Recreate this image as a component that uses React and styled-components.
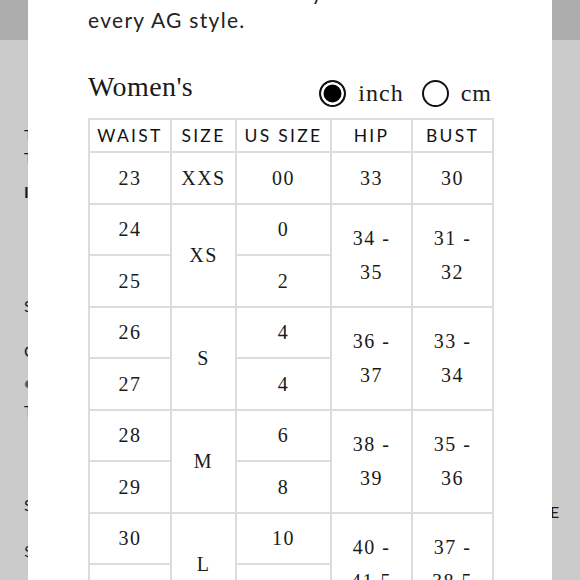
import React from 'react';
import styled, { createGlobalStyle } from 'styled-components';

const GlobalStyle = createGlobalStyle`
  html, body {
    margin: 0;
    padding: 0;
    height: 100%;
    overflow: hidden;
  }
  body {
    background: #cbcbcb;
    font-family: "Liberation Serif", serif;
  }
`;

const groups = [
  { size: 'XXS', hip: '33', bust: '30', rows: [['23', '00']] },
  { size: 'XS', hip: ['34 -', '35'], bust: ['31 -', '32'], rows: [['24', '0'], ['25', '2']] },
  { size: 'S', hip: ['36 -', '37'], bust: ['33 -', '34'], rows: [['26', '4'], ['27', '4']] },
  { size: 'M', hip: ['38 -', '39'], bust: ['35 -', '36'], rows: [['28', '6'], ['29', '8']] },
  { size: 'L', hip: ['40 -', '41.5'], bust: ['37 -', '38.5'], rows: [['30', '10'], ['31', '12']] },
];

// slivers of the page that sits behind the dimmed overlay
const backdropLines = [
  { text: 'T', top: 88 },
  { text: 'T', top: 9 },
  { text: 'I', top: 20, bold: true },
  { text: 'S', top: 100 },
  { text: 'C', top: 31 },
  { text: '●', top: 18, blue: true },
  { text: 'T', top: 14 },
  { text: 'S', top: 80 },
  { text: '$', top: 32 },
];

const Cell = ({ value }) =>
  Array.isArray(value) ? (
    <>
      {value[0]}
      <br />
      {value[1]}
    </>
  ) : (
    value
  );

export default function App() {
  return (
    <>
      <GlobalStyle />
      <Page>
        <TopBar />
        <Backdrop>
          {backdropLines.map((l, i) => (
            <Peek key={i} $top={l.top} $bold={l.bold} $blue={l.blue}>
              {l.text}
            </Peek>
          ))}
        </Backdrop>
        <RightPeek>E</RightPeek>
      </Page>

      <Modal>
        <Inner>
          <Intro>
            Use our chart to find your fit in
            <br />
            every AG style.
          </Intro>

          <HeadRow>
            <Title>Women's</Title>
            <Units>
              <Unit>
                <Radio $checked />
                inch
              </Unit>
              <Unit>
                <Radio />
                cm
              </Unit>
            </Units>
          </HeadRow>

          <Table>
            <colgroup>
              <col style={{ width: 82 }} />
              <col style={{ width: 65 }} />
              <col style={{ width: 95 }} />
              <col style={{ width: 81 }} />
              <col style={{ width: 81 }} />
            </colgroup>
            <thead>
              <tr>
                <Th>WAIST</Th>
                <Th>SIZE</Th>
                <Th>US SIZE</Th>
                <Th>HIP</Th>
                <Th>BUST</Th>
              </tr>
            </thead>
            <tbody>
              {groups.map((g) =>
                g.rows.map((r, i) => (
                  <tr key={g.size + i}>
                    <Td>{r[0]}</Td>
                    {i === 0 && <Td rowSpan={g.rows.length}>{g.size}</Td>}
                    <Td>{r[1]}</Td>
                    {i === 0 && (
                      <Td rowSpan={g.rows.length}>
                        <Cell value={g.hip} />
                      </Td>
                    )}
                    {i === 0 && (
                      <Td rowSpan={g.rows.length}>
                        <Cell value={g.bust} />
                      </Td>
                    )}
                  </tr>
                ))
              )}
            </tbody>
          </Table>
        </Inner>
      </Modal>
    </>
  );
}

const Page = styled.div`
  height: 580px;
  background: #cbcbcb;
`;

const TopBar = styled.div`
  height: 40px;
  background: #adadad;
`;

const Backdrop = styled.div`
  padding-left: 24px;
  display: flex;
  flex-direction: column;
`;

const Peek = styled.div`
  margin-top: ${(p) => p.$top}px;
  font-family: "Lato", sans-serif;
  font-size: 16px;
  line-height: 14px;
  font-weight: ${(p) => (p.$bold ? 700 : 400)};
  color: ${(p) => (p.$blue ? '#46627f' : '#1a1a1a')};
`;

const RightPeek = styled.div`
  position: absolute;
  left: 550px;
  top: 502px;
  font-family: "Lato", sans-serif;
  font-size: 16px;
  color: #1a1a1a;
`;

const Modal = styled.div`
  position: fixed;
  top: 0;
  bottom: 0;
  left: 28px;
  width: 524px;
  background: #fff;
  overflow: hidden;
`;

const Inner = styled.div`
  padding: 0 60px;
  margin-top: -22px;
`;

const Intro = styled.p`
  margin: 0;
  font-family: "Lato", sans-serif;
  font-size: 21px;
  line-height: 28px;
  letter-spacing: 1.3px;
  white-space: nowrap;
  color: #222;
`;

const HeadRow = styled.div`
  display: flex;
  justify-content: space-between;
  align-items: flex-end;
  margin-top: 34px;
  height: 40px;
`;

const Title = styled.h2`
  margin: 0 0 5px;
  font-family: "Liberation Serif", serif;
  font-weight: 400;
  font-size: 28px;
  line-height: 32px;
  letter-spacing: 0.4px;
  color: #1a1a1a;
`;

const Units = styled.div`
  display: flex;
  align-items: center;
  gap: 18px;
`;

const Unit = styled.label`
  display: flex;
  align-items: center;
  gap: 12px;
  font-family: "Liberation Serif", serif;
  font-size: 24px;
  letter-spacing: 1px;
  line-height: 30px;
  color: #1a1a1a;
`;

const Radio = styled.span`
  box-sizing: border-box;
  width: 27px;
  height: 27px;
  border-radius: 50%;
  border: 2px solid #111;
  background: ${(p) => (p.$checked ? '#000' : '#fff')};
  box-shadow: ${(p) => (p.$checked ? 'inset 0 0 0 2.5px #fff' : 'none')};
`;

const Table = styled.table`
  margin-top: 10px;
  width: 404px;
  table-layout: fixed;
  border-collapse: collapse;
`;

const Th = styled.th`
  height: 31px;
  padding: 0;
  border: 2px solid #dcdcdc;
  font-family: "Lato", sans-serif;
  font-weight: 400;
  font-size: 17.5px;
  letter-spacing: 2.3px;
  color: #111;
  text-align: center;
`;

const Td = styled.td`
  height: 49.5px;
  padding: 0;
  border: 2px solid #dcdcdc;
  font-family: "Liberation Serif", serif;
  font-size: 20px;
  line-height: 34px;
  letter-spacing: 1.5px;
  color: #1a1a1a;
  text-align: center;
`;
